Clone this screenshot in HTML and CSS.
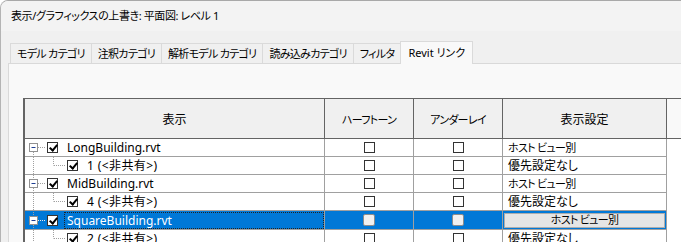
FILE: index.html
```html
<!DOCTYPE html>
<html lang="ja">
  <head>
    <meta charset="UTF-8" />
    <meta name="viewport" content="width=device-width, initial-scale=1.0" />
    <title>表示/グラフィックスの上書き</title>
    <link rel="stylesheet" href="styles.css">
  </head>
  <body>
    <div class="window">
      <div class="titlebar">表示/グラフィックスの上書き: 平面図: レベル 1</div>
      <div class="main">
        <div class="tabs">
          <div class="tab">モデル カテゴリ</div>
          <div class="tab">注釈カテゴリ</div>
          <div class="tab">解析モデル カテゴリ</div>
          <div class="tab">読み込みカテゴリ</div>
          <div class="tab">フィルタ</div>
          <div class="tab active">Revit リンク</div>
        </div>
        <div class="panel">
          <table class="grid">
            <colgroup>
              <col class="c-name" />
              <col class="c-half" />
              <col class="c-under" />
              <col class="c-disp" />
              <col />
            </colgroup>
            <thead>
              <tr>
                <th>表示</th>
                <th class="kana">ハーフトーン</th>
                <th class="kana">アンダーレイ</th>
                <th>表示設定</th>
                <th class="blank"></th>
              </tr>
            </thead>
            <tbody>
              <tr>
                <td>
                  <div class="tree">
                    <svg class="tw" width="22" height="17">
                      <path d="M8.5 13v4M13 8.5h8" stroke="#a0a0a0" stroke-dasharray="1 1" />
                      <rect x="4.5" y="4.5" width="8" height="8" fill="#fff" stroke="#919191" />
                      <path d="M6.5 8.5h4" stroke="#1e3e93" />
                    </svg>
                    <span class="cb on"></span>
                    <span class="label">LongBuilding.rvt</span>
                  </div>
                </td>
                <td class="mid"><span class="cb"></span></td>
                <td class="mid"><span class="cb"></span></td>
                <td class="disp kana">ホスト ビュー別</td>
                <td class="blank"></td>
              </tr>
              <tr>
                <td>
                  <div class="tree">
                    <svg class="tw" width="42" height="17">
                      <path d="M8.5 0v17M28.5 0v8.5M29 8.5h12" stroke="#a0a0a0" stroke-dasharray="1 1" />
                    </svg>
                    <span class="cb on"></span>
                    <span class="label sub">1 (&lt;非共有&gt;)</span>
                  </div>
                </td>
                <td class="mid"><span class="cb"></span></td>
                <td class="mid"><span class="cb"></span></td>
                <td class="disp">優先設定なし</td>
                <td class="blank"></td>
              </tr>
              <tr>
                <td>
                  <div class="tree">
                    <svg class="tw" width="22" height="17">
                      <path d="M8.5 0v4M8.5 13v4M13 8.5h8" stroke="#a0a0a0" stroke-dasharray="1 1" />
                      <rect x="4.5" y="4.5" width="8" height="8" fill="#fff" stroke="#919191" />
                      <path d="M6.5 8.5h4" stroke="#1e3e93" />
                    </svg>
                    <span class="cb on"></span>
                    <span class="label">MidBuilding.rvt</span>
                  </div>
                </td>
                <td class="mid"><span class="cb"></span></td>
                <td class="mid"><span class="cb"></span></td>
                <td class="disp kana">ホスト ビュー別</td>
                <td class="blank"></td>
              </tr>
              <tr>
                <td>
                  <div class="tree">
                    <svg class="tw" width="42" height="17">
                      <path d="M8.5 0v17M28.5 0v8.5M29 8.5h12" stroke="#a0a0a0" stroke-dasharray="1 1" />
                    </svg>
                    <span class="cb on"></span>
                    <span class="label sub">4 (&lt;非共有&gt;)</span>
                  </div>
                </td>
                <td class="mid"><span class="cb"></span></td>
                <td class="mid"><span class="cb"></span></td>
                <td class="disp">優先設定なし</td>
                <td class="blank"></td>
              </tr>
              <tr class="selected">
                <td>
                  <div class="tree">
                    <svg class="tw" width="22" height="17">
                      <path d="M8.5 0v4M8.5 13v4" stroke="#a0a0a0" stroke-dasharray="1 1" />
                      <path d="M13 8.5h8" stroke="#e8e8e8" stroke-dasharray="1 1" />
                      <rect x="4.5" y="4.5" width="8" height="8" fill="#fff" stroke="#919191" />
                      <path d="M6.5 8.5h4" stroke="#1e3e93" />
                    </svg>
                    <span class="cb on"></span>
                    <span class="label focus">SquareBuilding.rvt</span>
                  </div>
                </td>
                <td class="mid"><span class="cb"></span></td>
                <td class="mid"><span class="cb"></span></td>
                <td class="disp"><div class="combo kana">ホスト ビュー別</div></td>
                <td class="blank"></td>
              </tr>
              <tr>
                <td>
                  <div class="tree">
                    <svg class="tw" width="42" height="17">
                      <path d="M8.5 0v17M28.5 0v8.5M29 8.5h12" stroke="#a0a0a0" stroke-dasharray="1 1" />
                    </svg>
                    <span class="cb on"></span>
                    <span class="label sub">2 (&lt;非共有&gt;)</span>
                  </div>
                </td>
                <td class="mid"><span class="cb"></span></td>
                <td class="mid"><span class="cb"></span></td>
                <td class="disp">優先設定なし</td>
                <td class="blank"></td>
              </tr>
            </tbody>
          </table>
        </div>
      </div>
    </div>
  </body>
</html>
```

FILE: styles.css
```css
body {
  margin: 0;
  background-color: #ffffff;
  font-family: "Noto Sans", "Noto Sans CJK JP", sans-serif;
  font-size: 12px;
  font-feature-settings: "palt" 1;
  color: #000;
}

.window {
  height: 241px;
  border-top: 1px solid #a8a8a8;
  border-left: 1px solid #b4b4b4;
  border-radius: 8px 0 0 0;
  background-color: #f0f0f0;
  overflow: hidden;
}

.titlebar {
  height: 30px;
  line-height: 29px;
  padding-left: 10px;
  font-size: 11px;
  letter-spacing: -0.4px;
  background-color: #f3f3f3;
}

.main {
  padding: 10px 0 0 7px;
}

.tabs {
  display: flex;
  align-items: flex-end;
  margin-left: 2px;
  height: 22px;
}

.tab {
  height: 19px;
  line-height: 19px;
  padding: 0 6px;
  border: 1px solid #dadada;
  border-bottom: none;
  margin-right: -1px;
  background-color: #f0f0f0;
  font-size: 11px;
  letter-spacing: -0.7px;
  white-space: nowrap;
}

.tab.active {
  height: 22px;
  line-height: 21px;
  padding: 0 7px;
  letter-spacing: 0;
  background-color: #f9f9f9;
  position: relative;
  z-index: 1;
  margin-bottom: -1px;
}

.panel {
  border: 1px solid #d9d9d9;
  border-right: none;
  background-color: #f9f9f9;
  padding: 34px 0 0 14px;
  height: 200px;
}

.grid {
  table-layout: fixed;
  width: 700px;
  border-collapse: separate;
  border-spacing: 0;
  border-left: 2px solid #646464;
  border-top: 1px solid #646464;
}

.c-name {
  width: 300px;
}

.c-half,
.c-under {
  width: 89px;
}

.c-disp {
  width: 164px;
}

.grid th {
  height: 39px;
  padding: 0;
  font-weight: normal;
  background-color: #f0f0f0;
  border-right: 1px solid #646464;
  border-bottom: 1px solid #646464;
}

.grid th.blank {
  background-color: #f9f9f9;
  border-right: none;
}

.grid td {
  height: 17px;
  padding: 0;
  line-height: 17px;
  background-color: #fff;
  border-right: 1px solid #a0a0a0;
  border-bottom: 1px solid #a0a0a0;
  white-space: nowrap;
  overflow: hidden;
}

.grid td.blank {
  border: none;
  background-color: #fff;
}

.kana {
  font-size: 11px;
  letter-spacing: -0.7px;
}

.mid {
  text-align: center;
}

.disp {
  padding-left: 5px !important;
}

.tree {
  display: flex;
  align-items: center;
  height: 17px;
}

.tw {
  display: block;
  flex: none;
}

.cb {
  display: inline-block;
  position: relative;
  width: 11px;
  height: 11px;
  box-sizing: border-box;
  border: 1px solid #333;
  background-color: #fff;
  vertical-align: middle;
  margin-top: -2px;
}

.tree .cb {
  flex: none;
  margin-top: 0;
}

.cb.on::after {
  content: "";
  position: absolute;
  left: 3px;
  top: 0;
  width: 3px;
  height: 6px;
  border: solid #000;
  border-width: 0 2px 2px 0;
  transform: rotate(40deg);
}

.label {
  margin-left: 9px;
}

.label.sub {
  letter-spacing: 0.4px;
}

.selected td {
  background-color: #0078d7;
  color: #fff;
}

.selected td.blank {
  background-color: #fff;
}

.selected .mid .cb {
  width: 12px;
  height: 12px;
  border-color: #8c8c8c;
  border-radius: 2px;
  background-color: #f0f0f0;
}

.label.focus {
  margin-left: 6px;
  padding-left: 3px;
  flex: 1;
  height: 17px;
  outline: 1px dotted #222;
  outline-offset: -1px;
}

.selected .disp {
  padding: 1px 0 0 1px !important;
}

.combo {
  height: 13px;
  line-height: 12px;
  margin-right: 1px;
  text-align: center;
  color: #000;
  background-color: #e5e5e5;
  border: 1px solid #adadad;
}
```
